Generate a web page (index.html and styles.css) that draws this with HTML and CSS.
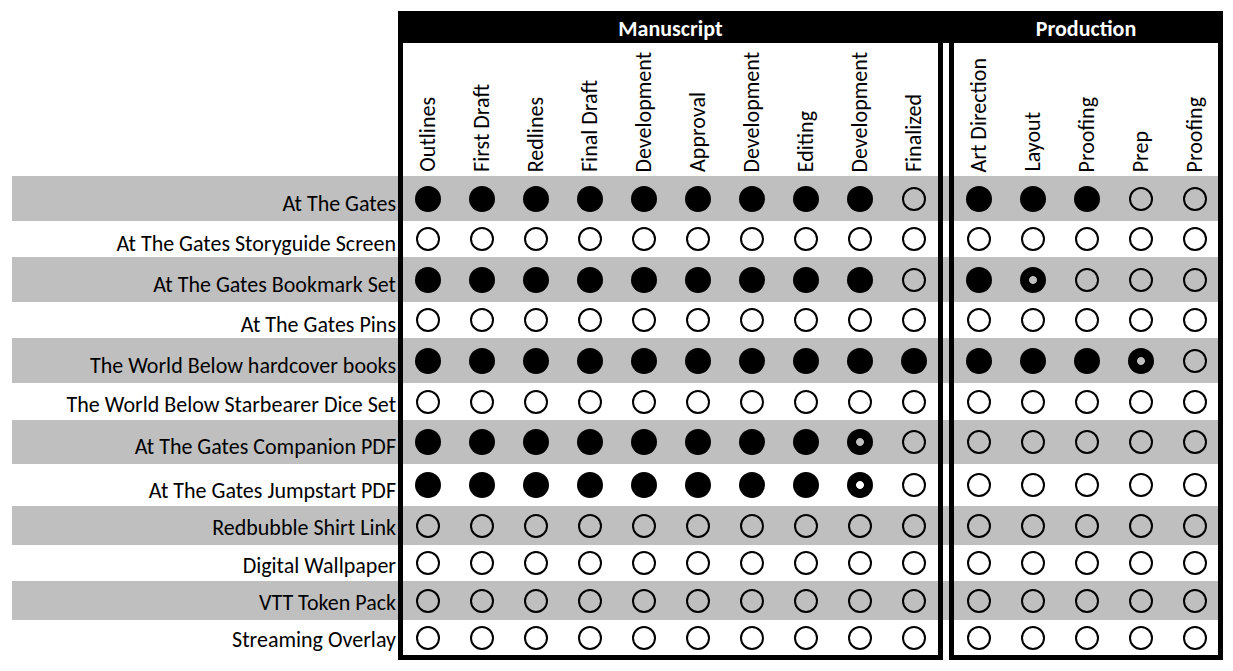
FILE: index.html
```html
<!DOCTYPE html>
<html lang="en">
<head>
<meta charset="utf-8">
<title>Status</title>
<link rel="stylesheet" href="styles.css">
</head>
<body>
<div class="sheet">
  <div class="headbar">
    <div class="title">Manuscript</div>
    <div></div>
    <div class="title">Production</div>
  </div>
  <div class="box box-ms"></div>
  <div class="box box-pr"></div>
  <div class="cols">
    <div></div>
    <div class="ch"><span>Outlines</span></div>
    <div class="ch"><span>First Draft</span></div>
    <div class="ch"><span>Redlines</span></div>
    <div class="ch"><span>Final Draft</span></div>
    <div class="ch"><span>Development</span></div>
    <div class="ch"><span>Approval</span></div>
    <div class="ch"><span>Development</span></div>
    <div class="ch"><span>Editing</span></div>
    <div class="ch"><span>Development</span></div>
    <div class="ch"><span>Finalized</span></div>
    <div></div>
    <div class="ch"><span>Art Direction</span></div>
    <div class="ch"><span>Layout</span></div>
    <div class="ch"><span>Proofing</span></div>
    <div class="ch"><span>Prep</span></div>
    <div class="ch"><span>Proofing</span></div>
  </div>
  <div class="rows">
    <div class="row g">
      <div class="name">At The Gates</div>
      <span class="d f"></span><span class="d f"></span><span class="d f"></span><span class="d f"></span><span class="d f"></span><span class="d f"></span><span class="d f"></span><span class="d f"></span><span class="d f"></span><span class="d"></span>
      <span class="sp"></span>
      <span class="d f"></span><span class="d f"></span><span class="d f"></span><span class="d"></span><span class="d"></span>
    </div>
    <div class="row tight">
      <div class="name">At The Gates Storyguide Screen</div>
      <span class="d"></span><span class="d"></span><span class="d"></span><span class="d"></span><span class="d"></span><span class="d"></span><span class="d"></span><span class="d"></span><span class="d"></span><span class="d"></span>
      <span class="sp"></span>
      <span class="d"></span><span class="d"></span><span class="d"></span><span class="d"></span><span class="d"></span>
    </div>
    <div class="row g">
      <div class="name">At The Gates Bookmark Set</div>
      <span class="d f"></span><span class="d f"></span><span class="d f"></span><span class="d f"></span><span class="d f"></span><span class="d f"></span><span class="d f"></span><span class="d f"></span><span class="d f"></span><span class="d"></span>
      <span class="sp"></span>
      <span class="d f"></span><span class="d h"></span><span class="d"></span><span class="d"></span><span class="d"></span>
    </div>
    <div class="row tight">
      <div class="name">At The Gates Pins</div>
      <span class="d"></span><span class="d"></span><span class="d"></span><span class="d"></span><span class="d"></span><span class="d"></span><span class="d"></span><span class="d"></span><span class="d"></span><span class="d"></span>
      <span class="sp"></span>
      <span class="d"></span><span class="d"></span><span class="d"></span><span class="d"></span><span class="d"></span>
    </div>
    <div class="row g">
      <div class="name">The World Below hardcover books</div>
      <span class="d f"></span><span class="d f"></span><span class="d f"></span><span class="d f"></span><span class="d f"></span><span class="d f"></span><span class="d f"></span><span class="d f"></span><span class="d f"></span><span class="d f"></span>
      <span class="sp"></span>
      <span class="d f"></span><span class="d f"></span><span class="d f"></span><span class="d h"></span><span class="d"></span>
    </div>
    <div class="row">
      <div class="name">The World Below Starbearer Dice Set</div>
      <span class="d"></span><span class="d"></span><span class="d"></span><span class="d"></span><span class="d"></span><span class="d"></span><span class="d"></span><span class="d"></span><span class="d"></span><span class="d"></span>
      <span class="sp"></span>
      <span class="d"></span><span class="d"></span><span class="d"></span><span class="d"></span><span class="d"></span>
    </div>
    <div class="row g">
      <div class="name">At The Gates Companion PDF</div>
      <span class="d f"></span><span class="d f"></span><span class="d f"></span><span class="d f"></span><span class="d f"></span><span class="d f"></span><span class="d f"></span><span class="d f"></span><span class="d h"></span><span class="d"></span>
      <span class="sp"></span>
      <span class="d"></span><span class="d"></span><span class="d"></span><span class="d"></span><span class="d"></span>
    </div>
    <div class="row">
      <div class="name">At The Gates Jumpstart PDF</div>
      <span class="d f"></span><span class="d f"></span><span class="d f"></span><span class="d f"></span><span class="d f"></span><span class="d f"></span><span class="d f"></span><span class="d f"></span><span class="d h"></span><span class="d"></span>
      <span class="sp"></span>
      <span class="d"></span><span class="d"></span><span class="d"></span><span class="d"></span><span class="d"></span>
    </div>
    <div class="row g">
      <div class="name">Redbubble Shirt Link</div>
      <span class="d"></span><span class="d"></span><span class="d"></span><span class="d"></span><span class="d"></span><span class="d"></span><span class="d"></span><span class="d"></span><span class="d"></span><span class="d"></span>
      <span class="sp"></span>
      <span class="d"></span><span class="d"></span><span class="d"></span><span class="d"></span><span class="d"></span>
    </div>
    <div class="row">
      <div class="name">Digital Wallpaper</div>
      <span class="d"></span><span class="d"></span><span class="d"></span><span class="d"></span><span class="d"></span><span class="d"></span><span class="d"></span><span class="d"></span><span class="d"></span><span class="d"></span>
      <span class="sp"></span>
      <span class="d"></span><span class="d"></span><span class="d"></span><span class="d"></span><span class="d"></span>
    </div>
    <div class="row g">
      <div class="name">VTT Token Pack</div>
      <span class="d"></span><span class="d"></span><span class="d"></span><span class="d"></span><span class="d"></span><span class="d"></span><span class="d"></span><span class="d"></span><span class="d"></span><span class="d"></span>
      <span class="sp"></span>
      <span class="d"></span><span class="d"></span><span class="d"></span><span class="d"></span><span class="d"></span>
    </div>
    <div class="row">
      <div class="name">Streaming Overlay</div>
      <span class="d"></span><span class="d"></span><span class="d"></span><span class="d"></span><span class="d"></span><span class="d"></span><span class="d"></span><span class="d"></span><span class="d"></span><span class="d"></span>
      <span class="sp"></span>
      <span class="d"></span><span class="d"></span><span class="d"></span><span class="d"></span><span class="d"></span>
    </div>
  </div>
</div>
</body>
</html>
```

FILE: styles.css
```css
html, body {
  margin: 0;
  background: #fff;
}

body {
  font-family: Carlito, Lato, "Liberation Sans", sans-serif;
  color: #000;
}

.sheet {
  display: grid;
  grid-template-columns: 386px 545px 6px 274px;
  grid-template-rows: 32px 133px 479px 5px;
  width: 1211px;
  margin: 11px 0 0 12px;
}

.headbar {
  grid-column: 2 / 5;
  grid-row: 1;
  display: grid;
  grid-template-columns: 545px 6px 274px;
  align-items: center;
  background: #000;
  color: #fff;
  font-weight: bold;
  font-size: 22px;
}

.title {
  text-align: center;
  padding-top: 3px;
}

.box {
  grid-row: 1 / -1;
  border: 5px solid #000;
  z-index: 2;
}

.box-ms { grid-column: 2; }
.box-pr { grid-column: 4; }

.cols,
.row {
  display: grid;
  grid-template-columns: 389px repeat(10, 54px) 11px repeat(5, 54px) 1px;
}

.cols {
  grid-column: 1 / -1;
  grid-row: 2;
  align-items: end;
}

.ch {
  display: flex;
  justify-content: center;
  padding-bottom: 4px;
}

.ch span {
  writing-mode: vertical-rl;
  transform: rotate(180deg);
  font-size: 22px;
  line-height: 24px;
  white-space: nowrap;
}

.rows {
  grid-column: 1 / -1;
  grid-row: 3;
  display: grid;
  grid-template-rows: 45px 36px 45px 36px 45px 37px 44px 42px 39px 36px 39px 35px;
}

.row {
  align-items: center;
  justify-items: center;
}

.row.g {
  background: #bfbfbf;
}

.name {
  justify-self: stretch;
  align-self: end;
  text-align: right;
  padding: 0 5px 2px 0;
  font-size: 22px;
  line-height: 26px;
  white-space: nowrap;
}

.row.g .name {
  padding-bottom: 4px;
}

.row.tight .name {
  padding-bottom: 0;
}

.d {
  width: 24px;
  height: 24px;
  box-sizing: border-box;
  border: 2px solid #000;
  border-radius: 50%;
}

.d.f {
  width: 26px;
  height: 26px;
  border: none;
  background: #000;
}

.d.h {
  width: 26px;
  height: 26px;
  border: none;
  background: radial-gradient(circle, transparent 3.5px, #000 4.3px);
}
```
